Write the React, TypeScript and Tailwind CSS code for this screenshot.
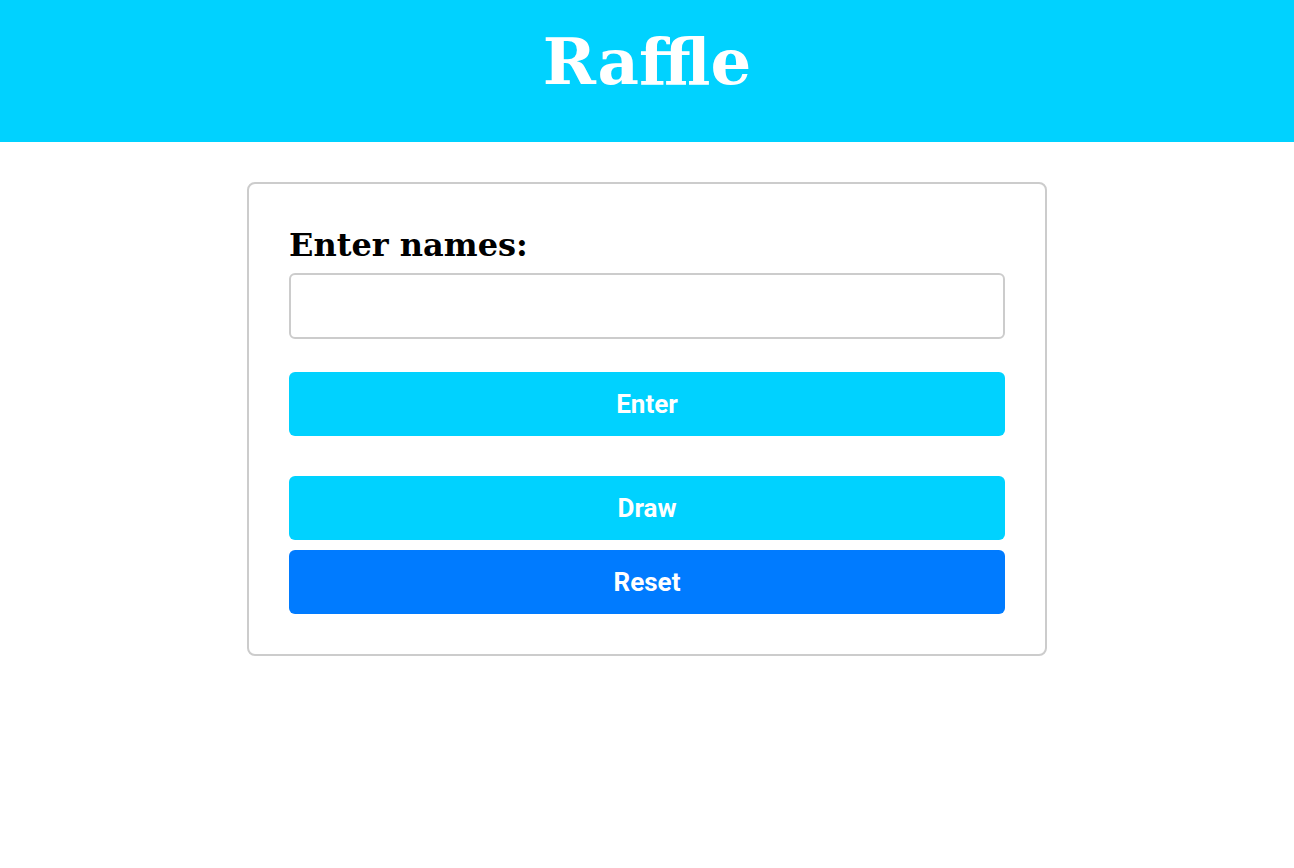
import React, { useState } from "react";

export default function App() {
  const [name, setName] = useState("");

  return (
    <div className="min-h-screen bg-white">
      <header className="bg-[#00d2ff] h-[142px] flex items-center justify-center pb-[18px]">
        <h1 className="text-white font-bold text-[64px] leading-none font-['DejaVu_Serif',serif]">
          Raffle
        </h1>
      </header>
      <main className="flex justify-center pt-10">
        <div className="w-[800px] border-2 border-[#cccccc] rounded-lg p-10">
          <label className="block mb-[7px] font-bold text-[32px] leading-[42px] font-['DejaVu_Serif',serif] text-black">
            Enter names:
          </label>
          <input
            value={name}
            onChange={(e) => setName(e.target.value)}
            className="block w-full h-[66px] border-2 border-[#cccccc] rounded-md px-3 text-xl outline-none"
          />
          <button className="mt-[33px] w-full h-16 rounded-md bg-[#00d2ff] text-white font-bold text-[26px] font-['Roboto',sans-serif]">
            Enter
          </button>
          <button className="mt-10 w-full h-16 rounded-md bg-[#00d2ff] text-white font-bold text-[26px] font-['Roboto',sans-serif]">
            Draw
          </button>
          <button className="mt-2.5 w-full h-16 rounded-md bg-[#007bff] text-white font-bold text-[26px] font-['Roboto',sans-serif]">
            Reset
          </button>
        </div>
      </main>
    </div>
  );
}
